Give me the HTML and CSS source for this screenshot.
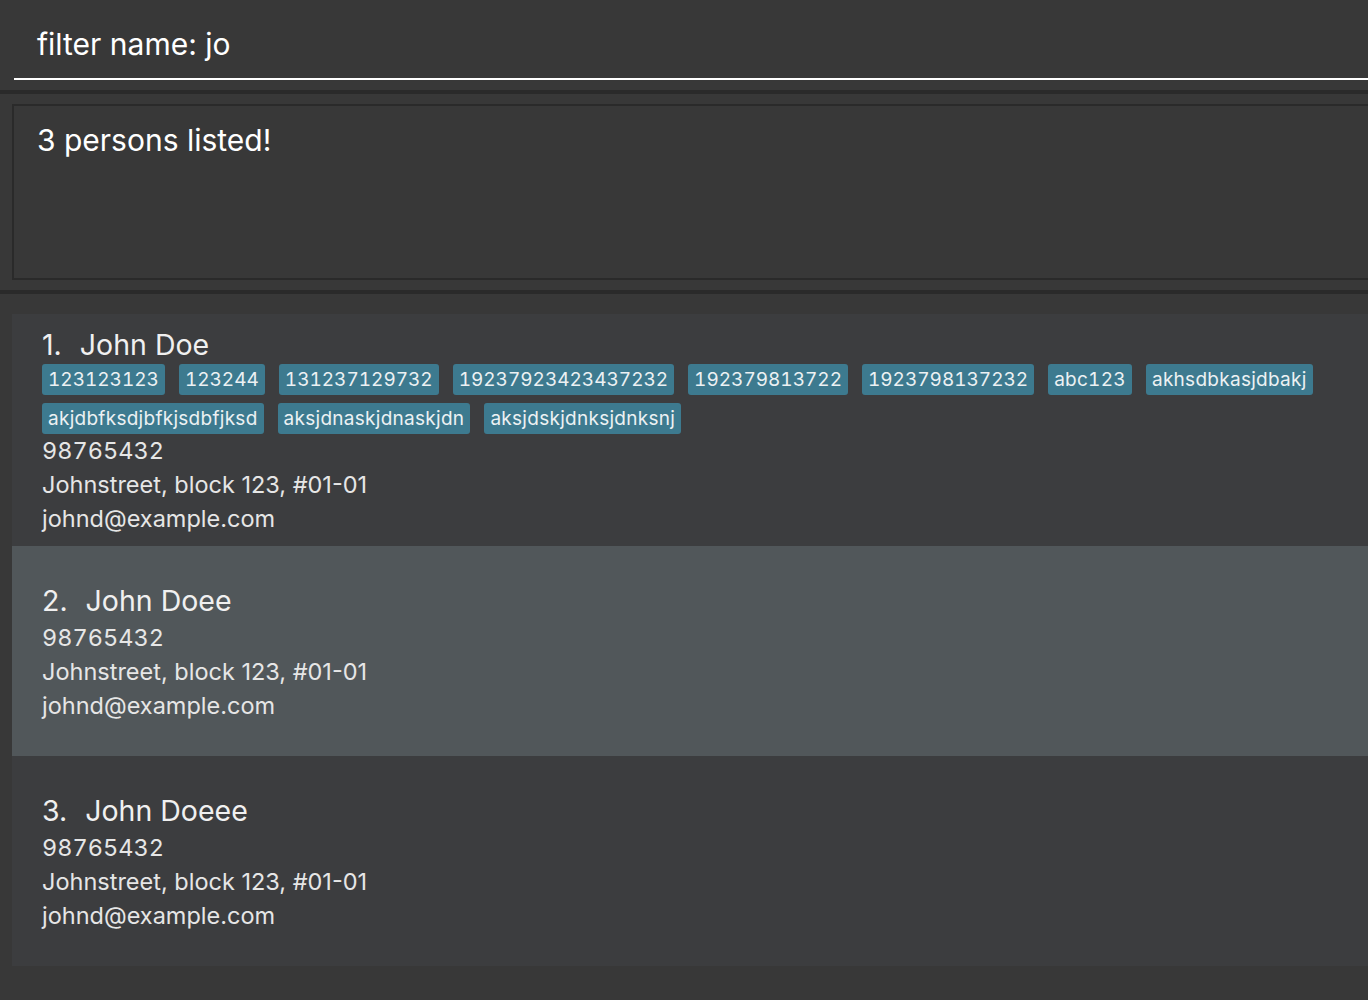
FILE: index.html
```html
<!DOCTYPE html>
<html>
<head>
<meta charset="utf-8">
<link rel="stylesheet" href="styles.css">
</head>
<body>
<div class="app">
  <div class="command">
    <div class="command-field">filter name: jo</div>
  </div>
  <div class="sep"></div>
  <div class="result-wrap">
    <div class="result-box">3 persons listed!</div>
  </div>
  <div class="sep"></div>
  <div class="list-wrap">
    <div class="list">
      <div class="card">
        <div class="name"><span class="idx">1.</span><span>John Doe</span></div>
        <div class="tags">
          <span class="tag">123123123</span>
          <span class="tag">123244</span>
          <span class="tag">131237129732</span>
          <span class="tag">19237923423437232</span>
          <span class="tag">192379813722</span>
          <span class="tag">1923798137232</span>
          <span class="tag alpha">abc123</span>
          <span class="tag alpha">akhsdbkasjdbakj</span>
          <span class="tag alpha">akjdbfksdjbfkjsdbfjksd</span>
          <span class="tag alpha">aksjdnaskjdnaskjdn</span>
          <span class="tag alpha">aksjdskjdnksjdnksnj</span>
        </div>
        <div class="line phone">98765432</div>
        <div class="line">Johnstreet, block 123, #01-01</div>
        <div class="line">johnd@example.com</div>
      </div>
      <div class="card selected">
        <div class="name"><span class="idx">2.</span><span>John Doee</span></div>
        <div class="line phone">98765432</div>
        <div class="line">Johnstreet, block 123, #01-01</div>
        <div class="line">johnd@example.com</div>
      </div>
      <div class="card">
        <div class="name"><span class="idx">3.</span><span>John Doeee</span></div>
        <div class="line phone">98765432</div>
        <div class="line">Johnstreet, block 123, #01-01</div>
        <div class="line">johnd@example.com</div>
      </div>
    </div>
  </div>
</div>
</body>
</html>
```
FILE: styles.css
```css
html, body {
  margin: 0;
  padding: 0;
  background: #383838;
  overflow: hidden;
}
body {
  font-family: Inter, "Noto Sans", sans-serif;
  color: #eeeeee;
}
.app {
  display: flex;
  flex-direction: column;
  width: 1368px;
  height: 1000px;
}
.command {
  height: 90px;
  box-sizing: border-box;
  padding-left: 14px;
}
.command-field {
  height: 80px;
  box-sizing: border-box;
  border-bottom: 2px solid #ffffff;
  padding-left: 23px;
  font-size: 30px;
  line-height: 88px;
  color: #ffffff;
}
.sep {
  height: 4px;
  background: #2a2a2a;
}
.result-wrap {
  padding: 10px 0 10px 12px;
}
.result-box {
  height: 176px;
  box-sizing: border-box;
  border: 2px solid #2a2a2a;
  border-right: none;
  padding: 15px 0 0 23px;
  font-size: 30px;
  line-height: 38px;
  color: #ffffff;
}
.list-wrap {
  padding: 20px 0 0 12px;
}
.list {
  background: #3c3d3f;
  display: flex;
  flex-direction: column;
}
.card {
  min-height: 210px;
  box-sizing: border-box;
  padding: 13px 0 10px 30px;
  display: flex;
  flex-direction: column;
  justify-content: center;
  background: #3c3d3f;
}
.card.selected {
  background: #51575a;
}
.name {
  display: flex;
  gap: 18px;
  font-size: 28.5px;
  line-height: 36px;
  margin-bottom: 2px;
  color: #f0f0f0;
}
.tags {
  display: flex;
  flex-wrap: wrap;
  gap: 8px 14px;
  margin-top: -1px;
}
.tag {
  background: #3d7a8f;
  color: #ecf1f3;
  font-size: 19px;
  font-variant-numeric: tabular-nums;
  line-height: 31px;
  padding: 0 6px;
  border-radius: 3px;
}
.tag.alpha {
  letter-spacing: 0.28px;
}
.line {
  font-size: 23.5px;
  line-height: 34px;
  color: #e6e6e6;
}
.phone {
  font-variant-numeric: tabular-nums;
}
```
